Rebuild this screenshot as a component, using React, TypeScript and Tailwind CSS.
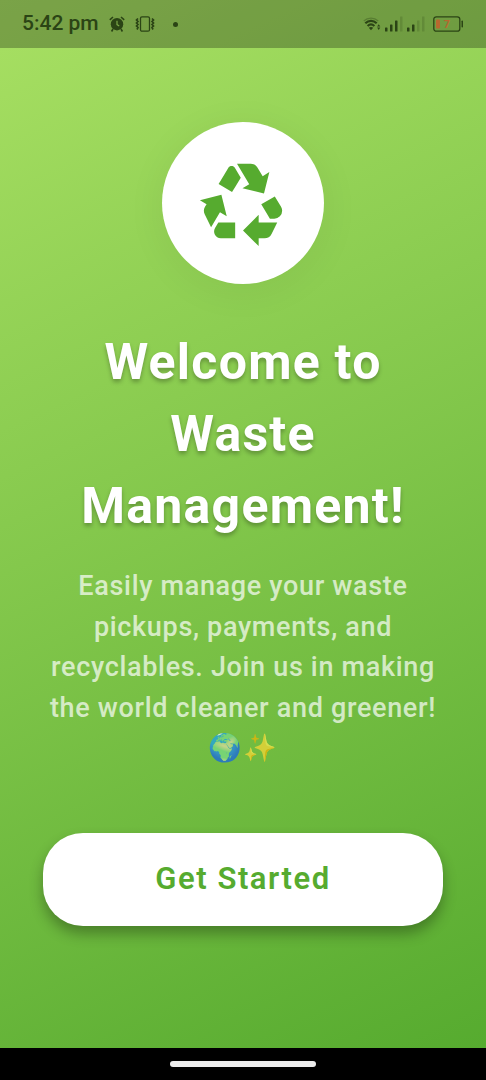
import { MdRecycling } from "react-icons/md";

function AlarmIcon() {
  return (
    <svg viewBox="0 0 16 16" className="size-4" aria-hidden="true">
      <path d="M.8 3.800 4 1M15.200 3.800 12 1M4 13 2.600 15.500M12 13l1.400 2.500" stroke="currentColor" strokeWidth="1.600" fill="none" />
      <circle cx="8" cy="8.200" r="6.200" fill="currentColor" />
      <path d="M8 4.800v3.800l2.200 1.400" stroke="#7ba648" strokeWidth="1.200" fill="none" />
    </svg>
  );
}

function VibrateIcon() {
  return (
    <svg viewBox="0 0 20 16" className="h-4 w-5" fill="none" stroke="currentColor" aria-hidden="true">
      <rect x="5.500" y="0.800" width="9" height="14.400" rx="1.500" strokeWidth="1.300" />
      <path d="M3 2.500 1.500 4 3 5.500 1.500 7 3 8.500 1.500 10 3 11.500 2 13.500M17 2.500 18.500 4 17 5.500 18.500 7 17 8.500 18.500 10 17 11.500l1 2" strokeWidth="1.700" />
    </svg>
  );
}

function WifiIcon() {
  return (
    <svg viewBox="0 0 18 16" className="h-4 w-[18px]" fill="none" stroke="currentColor" aria-hidden="true">
      <path d="M.8 5C4.800 1.200 11.200 1.200 15.200 5" strokeWidth="1.300" opacity=".35" />
      <path d="M2.300 7.200c3.300-3.200 8.100-3.200 11.400 0M4.600 10c2-1.800 4.800-1.800 6.800 0" strokeWidth="2.200" />
      <path d="m8 14.200-2.200-2.400c1.300-1 3.100-1 4.400 0z" fill="currentColor" stroke="none" />
      <path d="m15.700 8.200 1.600 2.400h-3.200zM15.700 14l1.600-2.400h-3.200z" fill="currentColor" stroke="none" />
    </svg>
  );
}

function SignalIcon({ bars }: { bars: number }) {
  return (
    <svg viewBox="0 0 18 16" className="h-4 w-[18px]" fill="currentColor" aria-hidden="true">
      {[4, 7, 11, 15].map((height, i) => (
        <rect key={height} x={i * 5} y={15.5 - height} width="2.500" height={height} rx=".6" opacity={i < bars ? 1 : 0.2} />
      ))}
    </svg>
  );
}

function BatteryIcon() {
  return (
    <svg viewBox="0 0 31 16" className="h-4 w-[31px]" aria-hidden="true">
      <rect x=".8" y=".8" width="26" height="14.400" rx="2.500" fill="none" stroke="currentColor" strokeWidth="1.300" />
      <rect x="3" y="3.500" width="4" height="9" rx="1" fill="#b8682f" />
      <rect x="28.500" y="4.500" width="1.500" height="7" rx=".7" fill="currentColor" />
      <text x="14" y="12" textAnchor="middle" fontSize="11" fontWeight="700" fontFamily="Roboto, sans-serif" fill="#b8682f">7</text>
    </svg>
  );
}

export default function App() {
  return (
    <div className="flex min-h-screen flex-col bg-black font-[Roboto,sans-serif]">
      <div className="flex flex-1 flex-col bg-linear-155 from-[#a8e063] to-[#56ab2f]">
        <header className="flex h-12 items-center justify-between bg-black/27 px-[22px] text-[#2b4415]">
          <div className="flex items-center">
            <time className="text-[21px] font-medium">5:42 pm</time>
            <span className="ml-2.5 flex items-center gap-2.5">
              <AlarmIcon />
              <VibrateIcon />
            </span>
            <span className="ml-[18px] size-[5px] rounded-full bg-current" />
          </div>
          <div className="flex items-center gap-1">
            <WifiIcon />
            <SignalIcon bars={3} />
            <SignalIcon bars={2} />
            <span className="ml-1 flex">
              <BatteryIcon />
            </span>
          </div>
        </header>

        <main className="flex flex-1 flex-col items-center justify-center px-[43px] pb-12 text-center">
          <div className="flex size-[162px] items-center justify-center rounded-full bg-white text-[#56ab2f] shadow-[0_6px_40px_rgba(0,0,0,0.06)]">
            <MdRecycling className="size-[94px]" aria-hidden="true" />
          </div>
          <h1 className="mt-[42px] text-[50px] leading-[72px] font-bold tracking-wide text-white [text-shadow:0_3px_4px_rgba(0,0,0,0.27)]">
            Welcome to Waste Management!
          </h1>
          <p className="mt-6 text-[27px] leading-normal font-medium tracking-wide text-white/70">
            Easily manage your waste pickups, payments, and recyclables. Join us in making the world cleaner and greener! 🌍✨
          </p>
          <button
            type="button"
            className="mt-16 h-[93px] w-full rounded-[40px] bg-white text-[31px] font-semibold tracking-wider text-[#56ab2f] shadow-[0_8px_14px_rgba(0,0,0,0.3)]"
          >
            Get Started
          </button>
        </main>
      </div>
      <footer className="flex h-8 items-center justify-center">
        <span className="h-1.5 w-[146px] rounded-full bg-[#ececec]" />
      </footer>
    </div>
  );
}
